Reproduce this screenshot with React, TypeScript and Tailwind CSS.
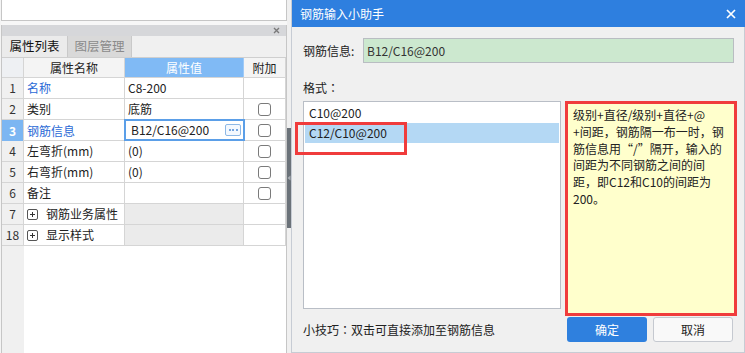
import React from "react";

type Row = {
  n: string;
  name: string;
  blue?: boolean;
  val?: string;
  cb?: boolean;
  sel?: boolean;
  group?: boolean;
};

const rows: Row[] = [
  { n: "1", name: "名称", blue: true, val: "C8-200" },
  { n: "2", name: "类别", val: "底筋", cb: true },
  { n: "3", name: "钢筋信息", blue: true, val: "B12/C16@200", cb: true, sel: true },
  { n: "4", name: "左弯折(mm)", val: "(0)", cb: true },
  { n: "5", name: "右弯折(mm)", val: "(0)", cb: true },
  { n: "6", name: "备注", val: "", cb: true },
  { n: "7", name: "钢筋业务属性", group: true },
  { n: "18", name: "显示样式", group: true },
];

function Checkbox() {
  return <div className="w-[13px] h-[13px] border border-[#7a7a7a] rounded-[3px] bg-white" />;
}

function PlusBox() {
  return (
    <svg width="11" height="11" viewBox="0 0 11 11" className="shrink-0">
      <rect x="0.5" y="0.5" width="10" height="10" rx="1.5" fill="white" stroke="#555" />
      <path d="M3 5.5H8M5.5 3V8" stroke="#333" strokeWidth="1" />
    </svg>
  );
}

function Colon() {
  return <span className="font-['Noto_Sans_CJK_TC',sans-serif]">：</span>;
}

export default function App() {
  return (
    <div className="w-[745px] h-[353px] flex bg-[#f4f4f4] overflow-hidden text-[12px] text-[#222] font-['Microsoft_YaHei','Noto_Sans_CJK_SC',sans-serif] leading-none">
      {/* Left panel */}
      <div className="w-[287px] h-full flex flex-col pl-px">
        <div className="h-[21px] bg-white border-l border-r border-b border-[#c6c6c6] shrink-0" />
        <div className="h-[4px] shrink-0 bg-[#f7f7f7]" />
        <div className="flex-1 flex flex-col border-l border-r border-[#c6c6c6] bg-white">
          <div className="h-[11px] bg-[#d6d7da] flex items-center justify-end pr-[6px] shrink-0">
            <svg width="7" height="7" viewBox="0 0 7 7">
              <path d="M1 1L6 6M6 1L1 6" stroke="#7a7a7a" strokeWidth="1.4" />
            </svg>
          </div>
          <div className="h-[22px] flex bg-[#f0f0f0] border-b border-[#cfcfcf] shrink-0">
            <div className="w-[65px] flex items-center justify-center bg-[#ebebeb] text-[#111] text-[12.5px]">属性列表</div>
            <div className="w-[65px] flex items-center justify-center bg-[#d9d9d9] text-[#8a8a8a] border-l border-r border-[#c9c9c9] text-[12.5px]">
              图层管理
            </div>
          </div>
          {/* header */}
          <div className="grid grid-cols-[22px_101px_119px_42px] h-[20px] border-b border-[#d5d5d5] shrink-0">
            <div className="bg-[#eef0f3] border-r border-[#d5d5d5]" />
            <div className="bg-[#f4f4f4] border-r border-[#d5d5d5] flex items-center justify-center">属性名称</div>
            <div className="bg-[#80baf5] border-r border-[#9fcaf7] flex items-center justify-center text-white">属性值</div>
            <div className="bg-[#f4f4f4] border-r border-[#d5d5d5] flex items-center justify-center">附加</div>
          </div>
          {rows.map((r) => (
            <div key={r.n} className="grid grid-cols-[22px_101px_119px_42px] h-[21px] border-b border-[#d5d5d5] shrink-0">
              <div
                className={
                  r.sel
                    ? "bg-[#7cb6f2] text-white font-bold border-r border-[#d5d5d5] flex items-center justify-center"
                    : "bg-[#f0f0f0] border-r border-[#d5d5d5] flex items-center justify-center text-[#333]"
                }
              >
                {r.n}
              </div>
              <div className={"border-r border-[#d5d5d5] flex items-center pl-[3px] gap-[8px] " + (r.blue ? "text-[#2a6ad6]" : "text-[#222]")}>
                {r.group && <PlusBox />}
                <span>{r.name}</span>
              </div>
              {r.group ? (
                <div className="bg-[#ebebeb] border-r border-[#d5d5d5]" />
              ) : r.sel ? (
                <div className="border-2 border-[#5b9fe8] flex items-center pl-[5px] pr-[2px] -ml-px -mt-px h-[22px] w-[121px] relative z-10 bg-white">
                  <span className="flex-1">{r.val}</span>
                  <div className="w-[16px] h-[12px] border border-[#8db8e6] rounded-[2px] bg-[#f3f8fe] flex items-center justify-center gap-[1.5px]">
                    <span className="w-[2px] h-[2px] bg-[#4a88d4] rounded-full" />
                    <span className="w-[2px] h-[2px] bg-[#4a88d4] rounded-full" />
                    <span className="w-[2px] h-[2px] bg-[#4a88d4] rounded-full" />
                  </div>
                </div>
              ) : (
                <div className="border-r border-[#d5d5d5] flex items-center pl-[3px]">{r.val}</div>
              )}
              <div className="border-r border-[#d5d5d5] flex items-center justify-center">{r.cb && <Checkbox />}</div>
            </div>
          ))}
          <div className="flex-1 flex">
            <div className="w-[22px] bg-[#f0f0f0]" />
            <div className="flex-1" />
          </div>
        </div>
      </div>

      {/* Splitter */}
      <div className="w-[4px] h-full flex flex-col bg-[#f0f0f0]">
        <div className="mt-[128px] h-[100px] bg-[#6b7279] flex items-center justify-center">
          <svg width="4" height="6" viewBox="0 0 4 6">
            <path d="M3.5 0.5L0.5 3L3.5 5.5Z" fill="#a9aeb4" />
          </svg>
        </div>
      </div>

      {/* Dialog */}
      <div className="w-[454px] h-full flex flex-col bg-[#f0f0f0] border-l border-r border-b border-[#c7ccd4]">
        <div className="h-[27px] bg-[#2e7fdf] flex items-center justify-between pl-[8px] pr-[9px] shrink-0 -mr-px">
          <span className="text-white text-[12px]">钢筋输入小助手</span>
          <svg width="10" height="10" viewBox="0 0 10 10">
            <path d="M1 1L9 9M9 1L1 9" stroke="white" strokeWidth="1.7" />
          </svg>
        </div>
        <div className="flex flex-col pl-[11px]">
          <div className="mt-[11px] flex items-center h-[25px]">
            <span className="w-[60px]">钢筋信息:</span>
            <div className="w-[371px] h-[25px] border border-[#b9bdc2] bg-[#cce8cf] flex items-center pl-[3px] text-[#333]">
              B12/C16@200
            </div>
          </div>
          <div className="mt-[18px] h-[14px] flex items-center">
            格式<Colon />
          </div>
          <div className="mt-[6px] flex items-start gap-[4px]">
            <div className="w-[258px] h-[208px] border border-[#b9bec6] bg-white relative p-px">
              <div className="h-[20px] flex items-center pl-[4px] text-[#222]">C10@200</div>
              <div className="h-[20px] flex items-center pl-[4px] bg-[#b4d8f4] text-[#222]">C12/C10@200</div>
              <div className="absolute left-[-9px] top-[20px] w-[112px] h-[33px] border-[3px] border-[#f03c3c]" />
            </div>
            <div className="w-[172px] h-[215px] border-[3px] border-[#f03c3c] bg-[#ffffcc] pl-[5px] pt-[3px] leading-[16.8px] text-[#222]">
              级别+直径/级别+直径+@
              <br />
              +间距，钢筋隔一布一时，钢
              <br />
              筋信息用“/”隔开，输入的
              <br />
              间距为不同钢筋之间的间
              <br />
              距，即C12和C10的间距为
              <br />
              200。
            </div>
          </div>
          <div className="mt-[1px] flex items-center h-[25px]">
            <span className="w-[264px]">
              小技巧<Colon />双击可直接添加至钢筋信息
            </span>
            <div className="w-[80px] h-[25px] rounded-[3px] bg-[#2f80de] text-white flex items-center justify-center">确定</div>
            <div className="ml-[6px] w-[80px] h-[25px] rounded-[3px] bg-[#f9f9f9] border border-[#c5c9d0] flex items-center justify-center">
              取消
            </div>
          </div>
        </div>
      </div>
    </div>
  );
}
